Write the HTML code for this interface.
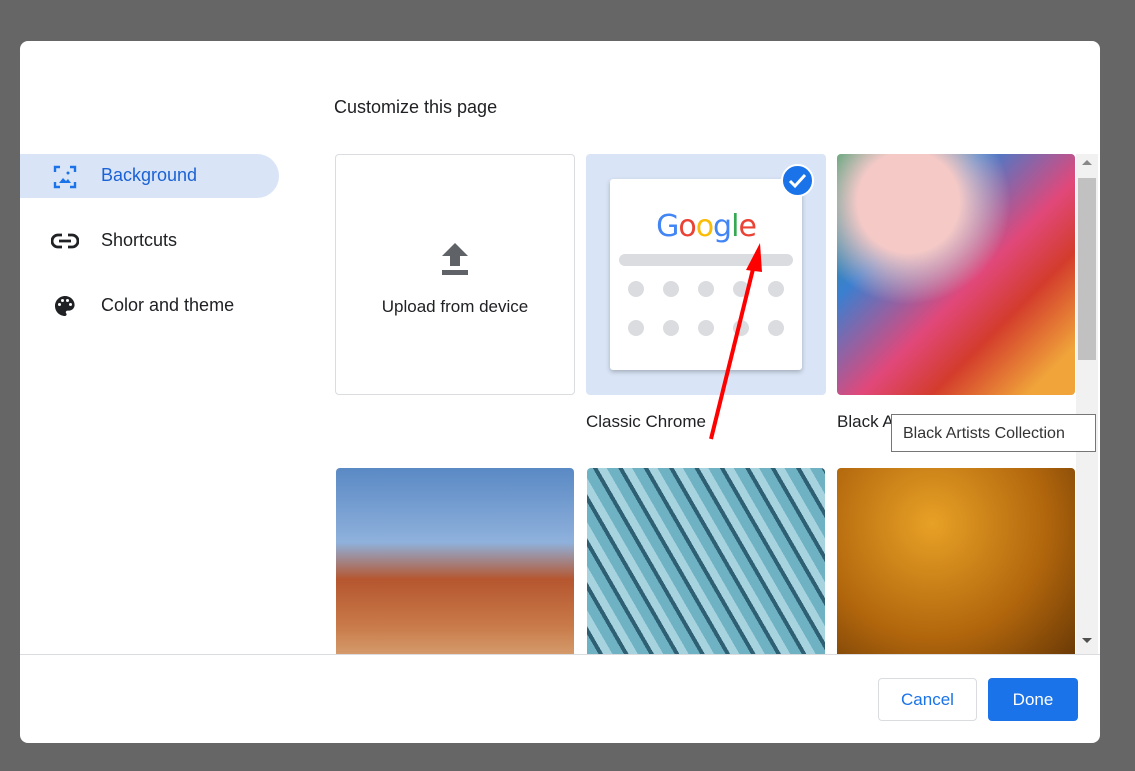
<!DOCTYPE html>
<html><head><style>
*{margin:0;padding:0;box-sizing:border-box}
body{width:1135px;height:771px;background:#666;font-family:"Liberation Sans",Arial,sans-serif;position:relative;overflow:hidden}
.dlg{position:absolute;left:20px;top:41px;width:1080px;height:702px;background:#fff;border-radius:8px;overflow:hidden}
.t{position:absolute;font-size:18px;color:#202124}
.nav{position:absolute;left:0;width:259px;height:44px;font-size:18px;color:#202124}
.nav span{position:absolute;left:81px;top:11px}
.tile{position:absolute;width:238px;border-radius:4px;overflow:hidden}
.dot{position:absolute;width:16px;height:16px;border-radius:50%;background:#dadce0}
.btn{position:absolute;top:637px;height:43px;border-radius:4px;font-size:17px;text-align:center;line-height:41px}
</style></head><body>
<div class="dlg">
<div class="t" style="left:314px;top:56px">Customize this page</div>
<div class="nav" style="top:113px;background:#d9e5f7;border-radius:0 22px 22px 0;color:#1a62d5"><svg style="position:absolute;left:33px;top:11px" width="24" height="24" viewBox="0 0 24 24" fill="none" stroke="#1a73e8" stroke-width="2.4"><path d="M2 7V2h5M17 2h5v5M22 17v5h-5M7 22H2v-5"/><path d="M6 18l4-5 3 3 2-2 3 4z" fill="#1a73e8" stroke="none"/><circle cx="15" cy="8" r="1.5" fill="#1a73e8" stroke="none"/></svg><span>Background</span></div>
<div class="nav" style="top:178px"><svg style="position:absolute;left:31px;top:11px" width="28" height="22" viewBox="0 0 28 22" fill="none" stroke="#202124" stroke-width="2.8"><path d="M11 5H7a6 6 0 0 0 0 12h4M17 5h4a6 6 0 0 1 0 12h-4M8 11h12"/></svg><span>Shortcuts</span></div>
<div class="nav" style="top:243px"><svg style="position:absolute;left:33px;top:10px" width="24" height="24" viewBox="0 0 24 24"><path fill="#202124" d="M12 2C6.5 2 2 6.5 2 12s4.5 10 10 10c.9 0 1.6-.7 1.6-1.6 0-.4-.2-.8-.4-1.1-.3-.3-.4-.7-.4-1.1 0-.9.7-1.6 1.6-1.6H16c3 0 5.6-2.5 5.6-5.6C21.6 6 17.3 2 12 2zM6.5 12a1.5 1.5 0 1 1 0-3 1.5 1.5 0 0 1 0 3zm3-4a1.5 1.5 0 1 1 0-3 1.5 1.5 0 0 1 0 3zm5 0a1.5 1.5 0 1 1 0-3 1.5 1.5 0 0 1 0 3zm3 4a1.5 1.5 0 1 1 0-3 1.5 1.5 0 0 1 0 3z"/></svg><span>Color and theme</span></div>

<div class="tile" style="left:315px;top:113px;height:241px;border:1px solid #dadce0;width:240px">
<svg style="position:absolute;left:104px;top:87px" width="30" height="34" viewBox="0 0 30 34"><path d="M15 1L2 14h8v10h10V14h8z" fill="#5f6368"/><rect x="2" y="28" width="26" height="5" fill="#5f6368"/></svg>
<div style="position:absolute;top:142px;width:100%;text-align:center;font-size:17px;color:#202124">Upload from device</div></div>

<div class="tile" style="left:566px;top:113px;height:241px;background:#d9e5f7;width:240px">
<div style="position:absolute;left:24px;top:25px;width:192px;height:191px;background:#fff;border-radius:3px;box-shadow:0 2px 5px rgba(0,0,0,.25)">
<div style="position:absolute;top:30px;width:100%;text-align:center;font-size:30px;font-family:'DejaVu Sans',sans-serif;letter-spacing:-1px"><span style="color:#4285f4">G</span><span style="color:#ea4335">o</span><span style="color:#fbbc05">o</span><span style="color:#4285f4">g</span><span style="color:#34a853">l</span><span style="color:#ea4335">e</span></div>
<div style="position:absolute;left:9px;top:75px;width:174px;height:12px;border-radius:6px;background:#dadce0"></div>
<div class="dot" style="left:18px;top:102px"></div><div class="dot" style="left:53px;top:102px"></div><div class="dot" style="left:88px;top:102px"></div><div class="dot" style="left:123px;top:102px"></div><div class="dot" style="left:158px;top:102px"></div>
<div class="dot" style="left:18px;top:141px"></div><div class="dot" style="left:53px;top:141px"></div><div class="dot" style="left:88px;top:141px"></div><div class="dot" style="left:123px;top:141px"></div><div class="dot" style="left:158px;top:141px"></div>
</div>
<div style="position:absolute;left:195px;top:10px;width:33px;height:33px;border-radius:50%;background:#1a73e8;border:2px solid #fff"><svg width="29" height="29" viewBox="0 0 29 29"><path d="M7 15l5 5 10-11" stroke="#fff" stroke-width="3" fill="none"/></svg></div>
</div>
<div class="t" style="left:566px;top:371px;font-size:17px">Classic Chrome</div>

<div class="tile" style="left:817px;top:113px;height:241px;background:radial-gradient(circle at 30% 20%,#f4c9c6 0 20%,transparent 40%),linear-gradient(135deg,#2e9b5e 0%,#3a7fd0 30%,#e1487a 55%,#d33c2c 70%,#f0a43a 90%)"></div>
<div class="t" style="left:817px;top:371px;font-size:17px">Black Ar</div>

<div class="tile" style="left:316px;top:427px;height:186px;border-radius:4px 4px 0 0;background:linear-gradient(180deg,#5a89c4 0%,#8fb1dc 40%,#b5562f 60%,#c97a4a 85%,#d49a6a 100%)"></div>
<div class="tile" style="left:567px;top:427px;height:186px;border-radius:4px 4px 0 0;background:repeating-linear-gradient(60deg,#6fb2c4 0 10px,#2e5f72 10px 14px,#a7d3df 14px 22px),#5aa0b5"></div>
<div class="tile" style="left:817px;top:427px;height:186px;border-radius:4px 4px 0 0;background:radial-gradient(circle at 40% 30%,#e8a126,#b0650c 60%,#6b3a06)"></div>

<div style="position:absolute;left:1056px;top:113px;width:22px;height:500px;background:#f1f1f1"><div style="position:absolute;left:2px;top:24px;width:18px;height:182px;background:#c1c1c1"></div>
<div style="position:absolute;left:6px;top:6px;border:5px solid transparent;border-bottom-color:#888;border-top:0"></div>
<div style="position:absolute;left:6px;top:484px;border:5px solid transparent;border-top-color:#505050;border-bottom:0"></div></div>

<div style="position:absolute;left:871px;top:373px;width:205px;height:38px;background:#fff;border:1px solid #767676;font-size:16px;color:#333;padding:10px 11px;white-space:nowrap;z-index:2">Black Artists Collection</div>

<div style="position:absolute;left:0;top:613px;width:1080px;height:1px;background:#dadce0"></div>
<div class="btn" style="left:858px;width:99px;border:1px solid #dadce0;color:#1a73e8">Cancel</div>
<div class="btn" style="left:968px;width:90px;background:#1a73e8;color:#fff;line-height:43px">Done</div>
</div>
<svg style="position:absolute;left:0;top:0" width="1135" height="771"><path d="M711 439L754 265" stroke="#f00" stroke-width="4"/><path d="M760 243L746 270L762 272z" fill="#f00"/></svg>
</body></html>
